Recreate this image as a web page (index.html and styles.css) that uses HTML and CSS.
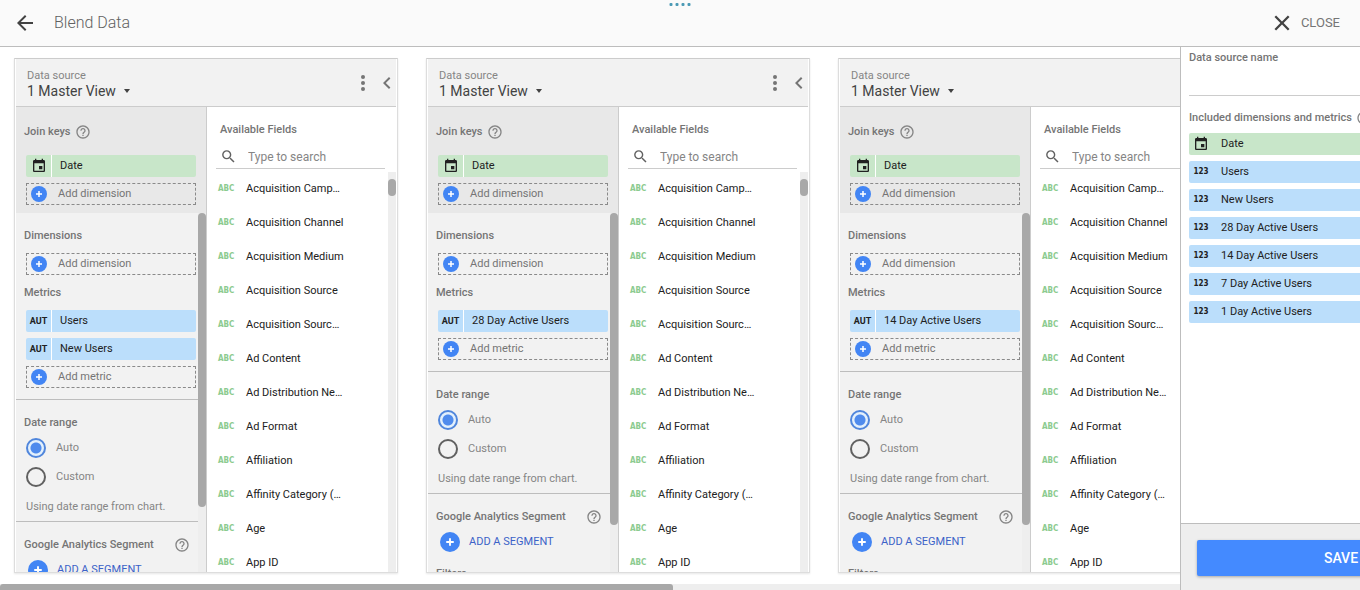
FILE: index.html
```html
<!DOCTYPE html>
<html lang="en">
<head>
<meta charset="utf-8">
<title>Blend Data</title>
<link rel="stylesheet" href="styles.css">
</head>
<body>
<svg class="sprite" aria-hidden="true">
  <symbol id="back" viewBox="0 0 24 24"><path d="M20 11H7.8l5.6-5.6L12 4l-8 8 8 8 1.4-1.4L7.8 13H20z"/></symbol>
  <symbol id="close" viewBox="0 0 24 24"><path d="M19.500 6.100 17.900 4.500 12 10.400 6.100 4.500 4.500 6.100l5.900 5.900-5.900 5.900 1.600 1.600 5.900-5.900 5.900 5.900 1.600-1.600-5.900-5.900z"/></symbol>
  <symbol id="more" viewBox="3 0 18 24"><circle cx="12" cy="6" r="2"/><circle cx="12" cy="12" r="2"/><circle cx="12" cy="18" r="2"/></symbol>
  <symbol id="chevron" viewBox="3 0 18 24"><path d="M15.400 7.400 14 6l-6 6 6 6 1.400-1.400L10.800 12z"/></symbol>
  <symbol id="help" viewBox="0 0 24 24"><path d="M11 18h2v-2h-2v2zm1-16C6.480 2 2 6.480 2 12s4.480 10 10 10 10-4.480 10-10S17.520 2 12 2zm0 18c-4.410 0-8-3.590-8-8s3.590-8 8-8 8 3.590 8 8-3.590 8-8 8zm0-14c-2.210 0-4 1.790-4 4h2c0-1.100.9-2 2-2s2 .9 2 2c0 2-3 1.750-3 5h2c0-2.250 3-2.500 3-5 0-2.210-1.790-4-4-4z"/></symbol>
  <symbol id="event" viewBox="0 0 24 24"><path d="M17 12h-5v5h5v-5zM16 1v2H8V1H6v2H5c-1.110 0-2 .9-2 2v14c0 1.100.890 2 2 2h14c1.100 0 2-.9 2-2V5c0-1.100-.9-2-2-2h-1V1h-2zm3 18H5V8h14v11z"/></symbol>
  <symbol id="search" viewBox="0 0 24 24"><path d="M15.500 14h-.790l-.280-.270A6.471 6.471 0 0 0 16 9.500 6.500 6.500 0 1 0 9.500 16c1.610 0 3.090-.590 4.230-1.570l.270.280v.790l5 4.990L20.490 19l-4.990-5zm-6 0C7.010 14 5 11.990 5 9.500S7.010 5 9.500 5 14 7.010 14 9.500 11.990 14 9.500 14z"/></symbol>
  <symbol id="plus" viewBox="0 0 16 16"><circle cx="8" cy="8" r="8" fill="#4285f4"/><path d="M8 5v6M5 8h6" stroke="#fff" stroke-width="1.500" fill="none"/></symbol>
</svg>

<header class="topbar">
  <span class="grip" aria-hidden="true"><i></i><i></i><i></i><i></i></span>
  <button class="icon-button" aria-label="Back"><svg class="icon-large"><use href="#back"/></svg></button>
  <h1 class="title">Blend Data</h1>
  <button class="close"><svg class="icon-large"><use href="#close"/></svg>CLOSE</button>
</header>

<main class="main">
  <div class="workspace">
    <div class="track">

      <article class="card">
        <header class="card-head">
          <div class="source"><span class="source-label">Data source</span><button class="source-name">1 Master View<span class="caret"></span></button></div>
          <button class="icon-button" aria-label="More"><svg class="icon-slim"><use href="#more"/></svg></button>
          <button class="icon-button" aria-label="Collapse"><svg class="icon-slim"><use href="#chevron"/></svg></button>
        </header>
        <div class="card-body">
          <div class="config">
            <section class="join">
              <h2 class="label">Join keys <svg class="icon-small"><use href="#help"/></svg></h2>
              <div class="chips">
                <div class="chip date"><span class="type"><svg class="icon-small"><use href="#event"/></svg></span><span class="name">Date</span></div>
                <button class="add"><svg class="icon-small"><use href="#plus"/></svg>Add dimension</button>
              </div>
            </section>
            <div class="scroller">
              <div class="sections">
                <section class="section roomy"><h2 class="label">Dimensions</h2>
                  <div class="chips"><button class="add"><svg class="icon-small"><use href="#plus"/></svg>Add dimension</button></div>
                </section>
                <section class="section metrics"><h2 class="label">Metrics</h2>
                  <div class="chips">
                    <div class="chip"><span class="type">AUT</span><span class="name">Users</span></div>
                    <div class="chip"><span class="type">AUT</span><span class="name">New Users</span></div>
                    <button class="add"><svg class="icon-small"><use href="#plus"/></svg>Add metric</button>
                  </div>
                </section>
                <section class="section range"><h2 class="label">Date range</h2>
                  <label class="radio"><input type="radio" name="range1" checked>Auto</label>
                  <label class="radio"><input type="radio" name="range1">Custom</label>
                  <p class="note">Using date range from chart.</p>
                </section>
                <section class="section segment"><h2 class="label spread">Google Analytics Segment <svg class="icon-small"><use href="#help"/></svg></h2>
                  <button class="add-segment"><svg class="icon-plus"><use href="#plus"/></svg>ADD A SEGMENT</button>
                </section>
              </div>
              <div class="bar"><span class="thumb short"></span></div>
            </div>
          </div>
          <div class="available">
            <h2 class="label">Available Fields</h2>
            <label class="search"><svg class="icon-search"><use href="#search"/></svg><input type="text" placeholder="Type to search" aria-label="Search fields"></label>
            <div class="list">
              <ul class="fields">
                <li><b>ABC</b>Acquisition Camp…</li><li><b>ABC</b>Acquisition Channel</li><li><b>ABC</b>Acquisition Medium</li><li><b>ABC</b>Acquisition Source</li><li><b>ABC</b>Acquisition Sourc…</li><li><b>ABC</b>Ad Content</li><li><b>ABC</b>Ad Distribution Ne…</li><li><b>ABC</b>Ad Format</li><li><b>ABC</b>Affiliation</li><li><b>ABC</b>Affinity Category (…</li><li><b>ABC</b>Age</li><li><b>ABC</b>App ID</li>
              </ul>
              <div class="bar"><span class="thumb tiny"></span></div>
            </div>
          </div>
        </div>
      </article>

      <article class="card">
        <header class="card-head">
          <div class="source"><span class="source-label">Data source</span><button class="source-name">1 Master View<span class="caret"></span></button></div>
          <button class="icon-button" aria-label="More"><svg class="icon-slim"><use href="#more"/></svg></button>
          <button class="icon-button" aria-label="Collapse"><svg class="icon-slim"><use href="#chevron"/></svg></button>
        </header>
        <div class="card-body">
          <div class="config">
            <section class="join">
              <h2 class="label">Join keys <svg class="icon-small"><use href="#help"/></svg></h2>
              <div class="chips">
                <div class="chip date"><span class="type"><svg class="icon-small"><use href="#event"/></svg></span><span class="name">Date</span></div>
                <button class="add"><svg class="icon-small"><use href="#plus"/></svg>Add dimension</button>
              </div>
            </section>
            <div class="scroller">
              <div class="sections">
                <section class="section roomy"><h2 class="label">Dimensions</h2>
                  <div class="chips"><button class="add"><svg class="icon-small"><use href="#plus"/></svg>Add dimension</button></div>
                </section>
                <section class="section metrics"><h2 class="label">Metrics</h2>
                  <div class="chips">
                    <div class="chip"><span class="type">AUT</span><span class="name">28 Day Active Users</span></div>
                    <button class="add"><svg class="icon-small"><use href="#plus"/></svg>Add metric</button>
                  </div>
                </section>
                <section class="section range"><h2 class="label">Date range</h2>
                  <label class="radio"><input type="radio" name="range2" checked>Auto</label>
                  <label class="radio"><input type="radio" name="range2">Custom</label>
                  <p class="note">Using date range from chart.</p>
                </section>
                <section class="section segment"><h2 class="label spread">Google Analytics Segment <svg class="icon-small"><use href="#help"/></svg></h2>
                  <button class="add-segment"><svg class="icon-plus"><use href="#plus"/></svg>ADD A SEGMENT</button>
                </section>
                <section class="section filters"><h2 class="label">Filters</h2></section>
              </div>
              <div class="bar"><span class="thumb long"></span></div>
            </div>
          </div>
          <div class="available">
            <h2 class="label">Available Fields</h2>
            <label class="search"><svg class="icon-search"><use href="#search"/></svg><input type="text" placeholder="Type to search" aria-label="Search fields"></label>
            <div class="list">
              <ul class="fields">
                <li><b>ABC</b>Acquisition Camp…</li><li><b>ABC</b>Acquisition Channel</li><li><b>ABC</b>Acquisition Medium</li><li><b>ABC</b>Acquisition Source</li><li><b>ABC</b>Acquisition Sourc…</li><li><b>ABC</b>Ad Content</li><li><b>ABC</b>Ad Distribution Ne…</li><li><b>ABC</b>Ad Format</li><li><b>ABC</b>Affiliation</li><li><b>ABC</b>Affinity Category (…</li><li><b>ABC</b>Age</li><li><b>ABC</b>App ID</li>
              </ul>
              <div class="bar"><span class="thumb tiny"></span></div>
            </div>
          </div>
        </div>
      </article>

      <article class="card">
        <header class="card-head">
          <div class="source"><span class="source-label">Data source</span><button class="source-name">1 Master View<span class="caret"></span></button></div>
          <button class="icon-button" aria-label="More"><svg class="icon-slim"><use href="#more"/></svg></button>
          <button class="icon-button" aria-label="Collapse"><svg class="icon-slim"><use href="#chevron"/></svg></button>
        </header>
        <div class="card-body">
          <div class="config">
            <section class="join">
              <h2 class="label">Join keys <svg class="icon-small"><use href="#help"/></svg></h2>
              <div class="chips">
                <div class="chip date"><span class="type"><svg class="icon-small"><use href="#event"/></svg></span><span class="name">Date</span></div>
                <button class="add"><svg class="icon-small"><use href="#plus"/></svg>Add dimension</button>
              </div>
            </section>
            <div class="scroller">
              <div class="sections">
                <section class="section roomy"><h2 class="label">Dimensions</h2>
                  <div class="chips"><button class="add"><svg class="icon-small"><use href="#plus"/></svg>Add dimension</button></div>
                </section>
                <section class="section metrics"><h2 class="label">Metrics</h2>
                  <div class="chips">
                    <div class="chip"><span class="type">AUT</span><span class="name">14 Day Active Users</span></div>
                    <button class="add"><svg class="icon-small"><use href="#plus"/></svg>Add metric</button>
                  </div>
                </section>
                <section class="section range"><h2 class="label">Date range</h2>
                  <label class="radio"><input type="radio" name="range3" checked>Auto</label>
                  <label class="radio"><input type="radio" name="range3">Custom</label>
                  <p class="note">Using date range from chart.</p>
                </section>
                <section class="section segment"><h2 class="label spread">Google Analytics Segment <svg class="icon-small"><use href="#help"/></svg></h2>
                  <button class="add-segment"><svg class="icon-plus"><use href="#plus"/></svg>ADD A SEGMENT</button>
                </section>
                <section class="section filters"><h2 class="label">Filters</h2></section>
              </div>
              <div class="bar"><span class="thumb long"></span></div>
            </div>
          </div>
          <div class="available">
            <h2 class="label">Available Fields</h2>
            <label class="search"><svg class="icon-search"><use href="#search"/></svg><input type="text" placeholder="Type to search" aria-label="Search fields"></label>
            <div class="list">
              <ul class="fields">
                <li><b>ABC</b>Acquisition Camp…</li><li><b>ABC</b>Acquisition Channel</li><li><b>ABC</b>Acquisition Medium</li><li><b>ABC</b>Acquisition Source</li><li><b>ABC</b>Acquisition Sourc…</li><li><b>ABC</b>Ad Content</li><li><b>ABC</b>Ad Distribution Ne…</li><li><b>ABC</b>Ad Format</li><li><b>ABC</b>Affiliation</li><li><b>ABC</b>Affinity Category (…</li><li><b>ABC</b>Age</li><li><b>ABC</b>App ID</li>
              </ul>
              <div class="bar"><span class="thumb tiny"></span></div>
            </div>
          </div>
        </div>
      </article>

    </div>
    <div class="hbar"><span class="hthumb"></span></div>
  </div>

  <aside class="result">
    <div class="result-body">
      <label class="label" for="source-name">Data source name</label>
      <input class="name-input" id="source-name" type="text">
      <h2 class="label included">Included dimensions and metrics <svg class="icon-small"><use href="#help"/></svg></h2>
      <div class="chips plain">
        <div class="chip date"><span class="type"><svg class="icon-small"><use href="#event"/></svg></span><span class="name">Date</span></div>
        <div class="chip"><span class="type num">123</span><span class="name">Users</span></div>
        <div class="chip"><span class="type num">123</span><span class="name">New Users</span></div>
        <div class="chip"><span class="type num">123</span><span class="name">28 Day Active Users</span></div>
        <div class="chip"><span class="type num">123</span><span class="name">14 Day Active Users</span></div>
        <div class="chip"><span class="type num">123</span><span class="name">7 Day Active Users</span></div>
        <div class="chip"><span class="type num">123</span><span class="name">1 Day Active Users</span></div>
      </div>
    </div>
    <footer class="result-foot"><button class="save">SAVE</button></footer>
  </aside>
</main>
</body>
</html>
```

FILE: styles.css
```css
* { box-sizing: border-box; }
body {
  margin: 0;
  height: 100vh;
  display: flex;
  flex-direction: column;
  overflow: hidden;
  background: #fff;
  color: #212121;
  font: 11px/16px Roboto, sans-serif;
}
h1, h2, p, ul { margin: 0; padding: 0; }
ul { list-style: none; }
button { border: 0; padding: 0; background: none; font: inherit; color: inherit; cursor: pointer; }
input { font: inherit; color: inherit; margin: 0; }
svg { display: block; flex: none; fill: currentColor; }
.sprite { position: absolute; width: 0; height: 0; }
.icon-small { width: 16px; height: 16px; }
.icon-search { width: 17px; height: 17px; }
.icon-plus { width: 20px; height: 20px; }
.icon-slim { width: 18px; height: 24px; }
.icon-large { width: 24px; height: 24px; }
.icon-button { display: block; }

.topbar {
  position: relative;
  flex: none;
  display: flex;
  align-items: center;
  height: 47px;
  padding: 0 20px 0 13px;
  background: #fafafa;
  border-bottom: 1px solid #bdbdbd;
  color: #424242;
}
.grip { position: absolute; top: 3px; left: 50%; transform: translateX(-50%); display: flex; gap: 3px; }
.grip i { width: 3px; height: 3px; border-radius: 1px; background: #4a9ab5; }
.title { margin-left: 17px; font-size: 16px; line-height: 20px; font-weight: 300; color: #616161; }
.close { display: flex; align-items: center; gap: 7px; margin-left: auto; font-size: 13px; color: #757575; }
.close svg { color: #424242; }

.main { flex: 1; display: flex; min-height: 0; }
.workspace { flex: 1; min-width: 0; display: flex; flex-direction: column; overflow: hidden; }
.track { flex: 1; min-height: 0; display: flex; gap: 28px; padding: 11px 14px; }
.hbar { flex: none; height: 6px; background: #eee; }
.hthumb { display: block; width: 57%; height: 6px; border-radius: 3px 3px 0 0; background: #a8a8a8; }

.card {
  flex: 0 0 384px;
  display: flex;
  flex-direction: column;
  border: 1px solid #ddd;
  border-top-color: #ccc;
  padding: 0 1px;
  box-shadow: 0 1px 2px rgba(0, 0, 0, .1);
}
.card-head {
  flex: none;
  display: flex;
  align-items: center;
  height: 48px;
  padding-left: 11px;
  background: #f2f2f2;
  border-bottom: 1px solid #ccc;
  color: #757575;
}
.card-head .icon-button { margin-left: 6px; }
.source { flex: 1; display: flex; flex-direction: column; align-items: flex-start; }
.source-label { color: #858585; }
.source-name { display: flex; align-items: center; gap: 8px; font-size: 14px; line-height: 14px; color: #424242; }
.caret { border: 3px solid transparent; border-top: 4px solid #424242; border-bottom: 0; }
.card-body { flex: 1; min-height: 0; display: flex; overflow: hidden; }

.config { flex: 1; min-width: 0; display: flex; flex-direction: column; background: #f2f2f2; border-right: 1px solid #ccc; }
.label { display: flex; align-items: center; gap: 4px; font-size: 11px; line-height: 18px; font-weight: 500; color: #757575; }
.label svg { color: #858585; }
.join { flex: none; padding: 16px 8px 8px; background: #e8e8e8; }
.join .label { margin-bottom: 14px; }
.scroller { flex: 1; min-height: 0; display: flex; overflow: hidden; }
.sections { flex: 1; min-width: 0; display: flex; flex-direction: column; }
.section { flex: none; padding-left: 8px; }
.section .label { margin-bottom: 8px; }
.roomy { padding-top: 14px; }
.metrics { padding-top: 9px; padding-bottom: 11px; border-bottom: 1px solid #bdbdbd; }
.range { padding-top: 14px; padding-bottom: 6px; border-bottom: 1px solid #bdbdbd; }
.range .label, .segment .label { margin-bottom: 6px; }
.segment { padding-top: 14px; }
.filters { padding-top: 13px; }
.spread { justify-content: space-between; padding-right: 8px; }

.chips { display: flex; flex-direction: column; gap: 6px; margin: 0 2px; }
.chip { display: flex; height: 22px; border-radius: 2px; background: #bbdefb; overflow: hidden; }
.date { background: #c8e6c9; }
.type { flex: none; display: flex; align-items: center; justify-content: center; width: 26px; line-height: 22px; font-size: 9px; font-weight: 700; border-right: 1px solid #fff; }
.num { font: 700 8px/22px "DejaVu Sans Condensed", "DejaVu Sans", sans-serif; }
.name { padding-left: 8px; line-height: 22px; white-space: nowrap; }
.plain { margin: 0; }
.plain .type { border-right: 0; width: 24px; }
.add { display: flex; align-items: center; gap: 11px; height: 22px; padding-left: 4px; border: 1px dashed #8a8a8a; color: #757575; }
.radio { display: flex; align-items: center; gap: 10px; margin: 0 0 9px 2px; color: #858585; }
.radio input { appearance: none; width: 20px; height: 20px; border: 2px solid #616161; border-radius: 50%; }
.radio input:checked { border-color: #5086dc; background: radial-gradient(circle, #4f8bed 5px, #e3f0fc 6px); }
.note { margin: 12px 0 0 2px; color: #858585; }
.add-segment { display: flex; align-items: center; gap: 9px; margin-left: 4px; color: #3c62c8; }

.bar { flex: none; width: 8px; background: #eee; }
.thumb { display: block; border-radius: 4px; background: #a8a8a8; }
.short { height: 82%; }
.long { height: 87%; }
.tiny { height: 17px; margin-top: 7px; }

.available { flex: none; width: 189px; display: flex; flex-direction: column; padding-top: 14px; }
.available > .label { padding-left: 13px; }
.search { display: flex; align-items: center; gap: 11px; height: 24px; margin: 6px 11px 0 9px; padding-left: 4px; border-bottom: 1px solid #ccc; color: #616161; }
.search input { flex: 1; min-width: 0; border: 0; padding: 0; outline: 0; background: none; font-size: 12px; }
.search input::placeholder { color: #858585; opacity: 1; }
.list { flex: 1; min-height: 0; display: flex; overflow: hidden; padding-top: 3px; }
.fields { flex: 1; min-width: 0; }
.fields li { display: flex; align-items: center; height: 34px; padding-left: 11px; white-space: nowrap; }
.fields b { flex: none; width: 28px; font: 700 8px/16px "DejaVu Sans Condensed", "DejaVu Sans", sans-serif; color: #8ccb8f; }

.result { flex: 0 0 180px; min-width: 0; display: flex; flex-direction: column; border-left: 1px solid #bdbdbd; overflow: hidden; }
.result-body { flex: 1; width: 320px; padding: 2px 8px; }
.name-input { display: block; width: 100%; height: 29px; border: 0; border-bottom: 1px solid #ccc; outline: 0; }
.included { margin: 13px 0 6px; }
.result-foot { flex: none; width: 320px; padding: 16px 16px 14px; background: #eee; border-top: 1px solid #bdbdbd; }
.save { display: block; width: 100%; height: 36px; border-radius: 2px; background: #448aff; color: #fff; font-size: 14px; font-weight: 500; box-shadow: 0 1px 3px rgba(0, 0, 0, .3); }
```
